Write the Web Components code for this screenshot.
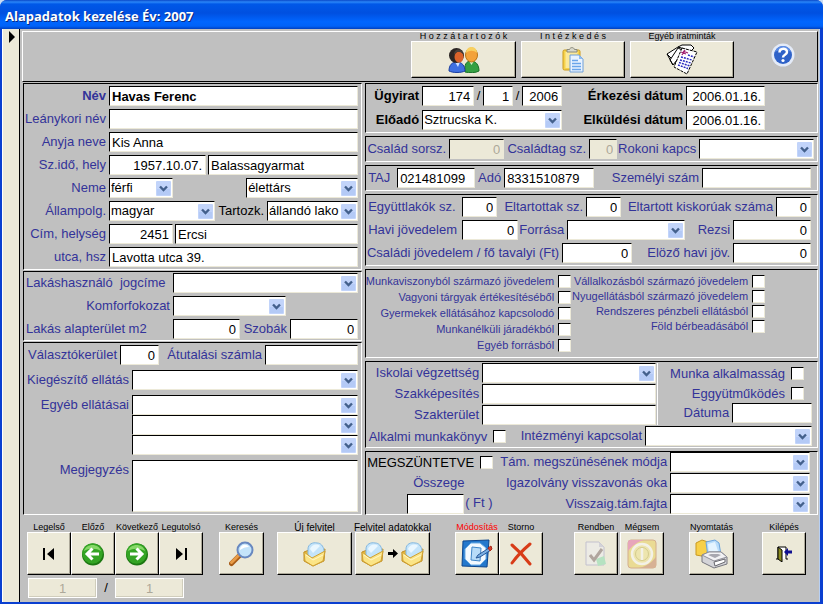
<!DOCTYPE html>
<html lang="hu">
<head>
<meta charset="utf-8">
<title>Alapadatok kezelése</title>
<style>
  body {
    margin: 0;
    background: #c9dcf4;
    font: 13px/16px "Liberation Sans", Arial, sans-serif;
    color: #000;
  }
</style>
</head>
<body>
<app-window heading="Alapadatok kezelése Év: 2007">
  <tool-header>
    <tool-button label="H o z z á t a r t o z ó k" icon="people" w="105" h="37"></tool-button>
    <tool-button label="I n t é z k e d é s" icon="clipboard" w="104" h="37"></tool-button>
    <tool-button label="Egyéb iratminták" icon="papers" w="104" h="37"></tool-button>
    <help-link></help-link>
  </tool-header>

  <form-columns>
    <form-stack slot="left" gap="1">
      <group-box gap="3" pad="2">
        <form-row><text-field label="Név" lw="82" value="Havas Ferenc" strong grow></text-field></form-row>
        <form-row><text-field label="Leánykori név" lw="82" grow></text-field></form-row>
        <form-row><text-field label="Anyja neve" lw="82" value="Kis Anna" grow></text-field></form-row>
        <form-row gap="2">
          <text-field label="Sz.idő, hely" lw="82" w="97" value="1957.10.07." align="end"></text-field>
          <text-field name="Születési hely" value="Balassagyarmat" grow></text-field>
        </form-row>
        <form-row spread>
          <select-field label="Neme" lw="82" w="64" value="férfi"></select-field>
          <select-field name="Családi állapot" w="112" value="élettárs"></select-field>
        </form-row>
        <form-row>
          <select-field label="Állampolg." lw="82" w="106" value="magyar"></select-field>
          <select-field label="Tartozk." lw="49" value="állandó lako" dark grow></select-field>
        </form-row>
        <form-row gap="2">
          <text-field label="Cím, helység" lw="82" w="64" value="2451" align="end"></text-field>
          <text-field name="Helység" value="Ercsi" grow></text-field>
        </form-row>
        <form-row><text-field label="utca, hsz" lw="82" value="Lavotta utca 39." grow></text-field></form-row>
      </group-box>

      <group-box gap="3" pad="1">
        <form-row><select-field label="Lakáshasználó  jogcíme" lw="146" start grow></select-field></form-row>
        <form-row><select-field label="Komforfokozat" lw="146" w="113"></select-field></form-row>
        <form-row>
          <text-field label="Lakás alapterület m2" lw="146" w="67" value="0" align="end" start></text-field>
          <text-field label="Szobák" lw="47" value="0" align="end" grow></text-field>
        </form-row>
      </group-box>

      <group-box gap="5" pad="2" fill>
        <form-row>
          <text-field label="Választókerület" lw="93" w="39" value="0" align="end"></text-field>
          <text-field label="Átutalási számla" lw="103" grow></text-field>
        </form-row>
        <form-row><select-field label="Kiegészítő ellátás" lw="105" grow></select-field></form-row>
        <form-stack gap="0">
          <form-row><select-field label="Egyéb ellátásai" lw="105" grow></select-field></form-row>
          <form-row indent="108"><select-field name="Egyéb ellátás 2" grow></select-field></form-row>
          <form-row indent="108"><select-field name="Egyéb ellátás 3" grow></select-field></form-row>
        </form-stack>
        <form-row><text-field label="Megjegyzés" lw="105" multiline grow></text-field></form-row>
      </group-box>
    </form-stack>

    <form-stack slot="right" gap="3">
      <group-box gap="4" pad="2">
        <form-row>
          <text-field label="Ügyirat" lw="53" w="52" value="174" align="end" heavy></text-field>
          <slash-mark></slash-mark>
          <text-field name="Alszám" w="30" value="1" align="end"></text-field>
          <slash-mark></slash-mark>
          <text-field name="Év" w="40" value="2006" align="end"></text-field>
          <text-field label="Érkezési dátum" lw="121" w="79" value="2006.01.16." align="end" heavy></text-field>
        </form-row>
        <form-row>
          <select-field label="Előadó" lw="53" w="140" value="Sztrucska K." heavy></select-field>
          <text-field label="Elküldési dátum" lw="121" w="79" value="2006.01.16." align="end" heavy></text-field>
        </form-row>
      </group-box>

      <group-box pad="2">
        <form-row>
          <text-field label="Család sorsz." lw="80" w="55" value="0" align="end" disabled></text-field>
          <text-field label="Családtag sz." lw="82" w="28" value="0" align="end" disabled></text-field>
          <select-field label="Rokoni kapcs" lw="79" grow></select-field>
        </form-row>
      </group-box>

      <group-box pad="2" inset="6">
        <form-row>
          <text-field label="TAJ" lw="28" w="78" value="021481099" start></text-field>
          <text-field label="Adó" lw="26" w="90" value="8331510879"></text-field>
          <text-field label="Személyi szám" lw="105" grow></text-field>
        </form-row>
      </group-box>

      <group-box gap="3" pad="2" inset="6">
        <form-row>
          <text-field label="Együttlakók sz." lw="93" w="35" value="0" align="end" start></text-field>
          <text-field label="Eltartottak sz." lw="86" w="35" value="0" align="end"></text-field>
          <text-field label="Eltartott kiskorúak száma" lw="152" value="0" align="end" grow></text-field>
        </form-row>
        <form-row>
          <text-field label="Havi jövedelem" lw="93" w="56" value="0" align="end" start></text-field>
          <select-field label="Forrása" lw="46" w="118"></select-field>
          <text-field label="Rezsi" lw="45" value="0" align="end" grow></text-field>
        </form-row>
        <form-row>
          <text-field label="Családi jövedelem / fő tavalyi (Ft)" lw="193" w="70" value="0" align="end"></text-field>
          <text-field label="Elöző havi jöv." lw="98" value="0" align="end" grow></text-field>
        </form-row>
      </group-box>

      <group-box pad="5">
        <form-row top>
          <form-stack gap="3" w="205">
            <check-field label="Munkaviszonyból származó jövedelem" small></check-field>
            <check-field label="Vagyoni tárgyak értékesítéséből" small></check-field>
            <check-field label="Gyermekek ellátásához kapcsolodó" small></check-field>
            <check-field label="Munkanélküli járadékból" small></check-field>
            <check-field label="Egyéb forrásból" small></check-field>
          </form-stack>
          <form-stack gap="2" w="194">
            <check-field label="Vállalkozásból származó jövedelem" small></check-field>
            <check-field label="Nyugellátásból származó jövedelem" small></check-field>
            <check-field label="Rendszeres pénzbeli ellátásból" small></check-field>
            <check-field label="Föld bérbeadásából" small></check-field>
          </form-stack>
        </form-row>
      </group-box>

      <group-box gap="1" pad="1" inset="5">
        <form-row top>
          <form-stack gap="1" w="292" ruled>
            <form-row><select-field label="Iskolai végzettség" lw="113" grow></select-field></form-row>
            <form-row><text-field label="Szakképesítés" lw="113" grow></text-field></form-row>
            <form-row><text-field label="Szakterület" lw="113" grow></text-field></form-row>
          </form-stack>
          <form-stack gap="0" grow>
            <check-field label="Munka alkalmasság" inset="8"></check-field>
            <check-field label="Eggyütműködés" inset="8"></check-field>
            <form-row><text-field label="Dátuma" lw="71" grow></text-field></form-row>
          </form-stack>
        </form-row>
        <form-row>
          <check-field label="Alkalmi munkakönyv" w="140"></check-field>
          <select-field label="Intézményi kapcsolat" lw="136" grow></select-field>
        </form-row>
      </group-box>

      <group-box pad="0" inset="7">
        <form-row top>
          <form-stack gap="1" w="127">
            <check-field label="MEGSZÜNTETVE" dark></check-field>
            <form-row indent="41"><text-field label="Összege" w="57" suffix="( Ft )" stacked></text-field></form-row>
          </form-stack>
          <form-stack gap="1" grow>
            <form-row><select-field label="Tám. megszünésének módja" lw="174" grow></select-field></form-row>
            <form-row><select-field label="Igazolvány visszavonás oka" lw="174" grow></select-field></form-row>
            <form-row><select-field label="Visszaig.tám.fajta" lw="174" grow></select-field></form-row>
          </form-stack>
        </form-row>
      </group-box>
    </form-stack>
  </form-columns>

  <tool-footer>
    <button-group space="5">
      <tool-button label="Legelső" icon="first"></tool-button>
      <tool-button label="Előző" icon="prev"></tool-button>
      <tool-button label="Következő" icon="next"></tool-button>
      <tool-button label="Legutolsó" icon="last"></tool-button>
    </button-group>
    <button-group space="16">
      <tool-button label="Keresés" icon="search" w="45"></tool-button>
    </button-group>
    <button-group space="13" gap="3">
      <tool-button label="Új felvitel" icon="folder" w="75" roomy></tool-button>
      <tool-button label="Felvitel adatokkal" icon="copy" w="75" roomy></tool-button>
    </button-group>
    <button-group space="25">
      <tool-button label="Módosítás" icon="edit" alert></tool-button>
      <tool-button label="Storno" icon="cross"></tool-button>
    </button-group>
    <button-group space="31" gap="2">
      <tool-button label="Rendben" icon="accept" disabled></tool-button>
      <tool-button label="Mégsem" icon="cancel" disabled></tool-button>
    </button-group>
    <button-group space="25">
      <tool-button label="Nyomtatás" icon="printer" w="45"></tool-button>
    </button-group>
    <button-group space="28">
      <tool-button label="Kilépés" icon="exit"></tool-button>
    </button-group>
    <record-counter slot="counter" current="1" total="1"></record-counter>
  </tool-footer>
</app-window>

<script>
const ICONS = {
  people: `<svg width="32" height="26" viewBox="0 0 32 26">
    <path d="M17 25c-1-7 1-11 6-11 5 0 8 4 8 10-3 2-10 2-14 1z" fill="#35a043" stroke="#187028"/>
    <path d="M21 14l2.500 4 2.500-4z" fill="#d8f0d0"/>
    <ellipse cx="23.500" cy="8" rx="6" ry="7" fill="#f3a23a" stroke="#b87416"/>
    <path d="M18 6c0-8 11-8 11 0-3-3-8-3-11 0z" fill="#f8d060"/>
    <path d="M1 24c0-6 3-9 8-9 5 0 8 4 8 9-4 2-12 2-16 0z" fill="#3f6fe0" stroke="#1c3fa0"/>
    <path d="M7 15l3 5 2-5z" fill="#cfe0ff"/>
    <circle cx="8.500" cy="8.500" r="7.500" fill="#2b2523"/>
    <ellipse cx="11" cy="10" rx="4.500" ry="5.500" fill="#d9622b"/>
    <path d="M6 8c2-4 6-4 9-1 0-5-9-7-9 1z" fill="#48403c"/></svg>`,
  clipboard: `<svg width="22" height="26" viewBox="0 0 22 26">
    <rect x="1" y="3" width="17" height="20" rx="1.500" fill="#f6d24c" stroke="#c99a1c"/>
    <rect x="3.500" y="5" width="12" height="16" fill="#fbe99a"/>
    <path d="M5 5V2.500h2.500C8 0 12 0 12.500 2.500H15V5z" fill="#d8d8cc" stroke="#8a8a7c"/>
    <path d="M8 8h9l4 4v13H8z" fill="#e8f3ff" stroke="#6e9fd8"/>
    <path d="M17 8v4h4z" fill="#8fbcf0"/>
    <path d="M10 13.500h6M10 16.500h9M10 19.500h9M10 22.500h9" stroke="#6aa5ea" stroke-width="1.500"/></svg>`,
  papers: `<svg width="34" height="31" viewBox="0 0 34 31">
    <path d="M2 10l11-7 12 2-9 19z" fill="#fff" stroke="#000"/>
    <path d="M2 10l6 11M5 16L13 4l6 3-11 14z" fill="#fff" stroke="#000"/>
    <path d="M13 3l4-2h9l3 3-3 3z" fill="#fff" stroke="#000"/>
    <path d="M17 4l15 4-10 22-13-7z" fill="#fff" stroke="#000" stroke-dasharray="3 1"/>
    <path d="M16 8l5 2M20 6l-3 5M18 7l5 2" stroke="#a02070" stroke-width="1.300"/>
    <path d="M23 11l6 2M16 13l11 3M15 16l11 3M14 18.500l11 3.500M13 21l10 3.500" stroke="#2a2ac0" stroke-width="1.500" stroke-dasharray="2 1"/></svg>`,
  first: `<svg width="12" height="12" viewBox="0 0 12 12"><path d="M0 0h2v12H0zM11 0v12L4 6z"/></svg>`,
  last: `<svg width="12" height="12" viewBox="0 0 12 12"><path d="M10 0h2v12h-2zM1 0v12l7-6z"/></svg>`,
  prev: `<svg width="24" height="24" viewBox="0 0 24 24">
    <circle cx="12" cy="12.500" r="11" fill="#1c7812"/><circle cx="11.500" cy="11.500" r="10.300" fill="#34a424"/>
    <path d="M3 9C5 1 18 1 20 9 15 6 8 6 3 9z" fill="#86d868"/>
    <path d="M18 12H6M11.500 6.500L6 12l5.500 5.500" fill="none" stroke="#fff" stroke-width="3"/></svg>`,
  next: `<svg width="24" height="24" viewBox="0 0 24 24">
    <circle cx="12" cy="12.500" r="11" fill="#1c7812"/><circle cx="11.500" cy="11.500" r="10.300" fill="#34a424"/>
    <path d="M3 9C5 1 18 1 20 9 15 6 8 6 3 9z" fill="#86d868"/>
    <path d="M5 12h12M11.500 6.500L17 12l-5.500 5.500" fill="none" stroke="#fff" stroke-width="3"/></svg>`,
  search: `<svg width="26" height="26" viewBox="0 0 26 26">
    <path d="M2.500 22.500l8-8" stroke="#a85c18" stroke-width="5" stroke-linecap="round"/>
    <path d="M2.500 21.500l8-8" stroke="#e89c48" stroke-width="3" stroke-linecap="round"/>
    <circle cx="16" cy="9" r="7.500" fill="#c4e4fa" stroke="#6888c0" stroke-width="2"/>
    <path d="M11 9c0-5 6-7 9-3-4 0-6 1-9 3z" fill="#fff"/></svg>`,
  folder: `<svg width="24" height="26" viewBox="0 0 24 26">
    <path d="M1 11l5-2 3 2 13-3-1 12-11 5-9-5z" fill="#e9b93c" stroke="#c0902a"/>
    <path d="M5 8c0-5 5-7 9-6 4 0 6 3 7 7v5l-11 5-5-4z" fill="#c4e4fa" stroke="#84b8e0"/>
    <path d="M7 8c1-4 7-6 10-3l-7 7z" fill="#eaf7ff"/>
    <path d="M1 11l8 6 13-7-2 10-10 5-8-5z" fill="#fbe486" stroke="#d0a030"/>
    <path d="M3 14l7 5 10-5" fill="none" stroke="#fff6c8"/></svg>`,
  edit: `<svg width="32" height="30" viewBox="0 0 32 30">
    <path d="M2 2l26-1-2 27-25-1z" fill="#2478cc" stroke="#0c448c"/>
    <path d="M10 4h9l6 5v11l-6 6h-9l-6-6V10z" fill="#f2f9ff" stroke="#6cace4"/>
    <path d="M11 8l9 1-1 13-9-1z" fill="#b8dcf8" stroke="#3f86c8"/>
    <path d="M28 9L17 16l-2 3 4-1 11-7z" fill="#7ab0e4" stroke="#285898"/>
    <path d="M27 9l3-2 1 3-2 2z" fill="#d8402c" stroke="#a82818"/></svg>`,
  cross: `<svg width="24" height="24" viewBox="0 0 24 24">
    <path d="M3 3c7 6 12 11 18 19M21 2C14 8 8 14 3 21" fill="none" stroke="#d83c18" stroke-width="3" stroke-linecap="round"/></svg>`,
  accept: `<svg width="22" height="26" viewBox="0 0 22 26">
    <path d="M1 1h13l5 5v18H1z" fill="#eef0fa" stroke="#8888c0"/>
    <path d="M14 1v5h5z" fill="#b0b0d8"/>
    <path d="M11 18l8-3 2 8-8 2z" fill="#68d8a0"/>
    <path d="M5 14l4 5 8-11" fill="none" stroke="#584048" stroke-width="3"/></svg>`,
  cancel: `<svg width="30" height="30" viewBox="0 0 30 30">
    <rect x="1" y="1" width="28" height="28" rx="3" fill="#e8c830" stroke="#b05820"/>
    <path d="M1 12V3c0-1 1-2 2-2h14C10 3 5 7 1 12z" fill="#e04090"/>
    <path d="M29 18v9c0 1-1 2-2 2H12c8-2 13-6 17-11z" fill="#b86030"/>
    <circle cx="15" cy="15" r="10" fill="#f0e070" stroke="#fff" stroke-width="2.500"/>
    <circle cx="15" cy="15" r="6.500" fill="none" stroke="#b0a020"/>
    <path d="M15 9v12" stroke="#fff" stroke-width="2.500"/></svg>`,
  printer: `<svg width="33" height="30" viewBox="0 0 33 30">
    <path d="M1 4l6-3 6 2-1 15-11-2z" fill="#f8d048" stroke="#c89820"/>
    <path d="M11 3l9-2 4 3 2 12-13 2z" fill="#b8dcfa" stroke="#6ca4dc"/>
    <path d="M13 5l7-2 3 9-9 3z" fill="#e4f4ff"/>
    <path d="M7 16l7-3h12l6 5v7l-13 4-12-6z" fill="#d4d4d8" stroke="#76767e"/>
    <path d="M7 16l7-3h12l6 5-13 4z" fill="#f2f2f4" stroke="#909098"/>
    <path d="M13 16l3-1h7l3 1-6 3z" fill="#a8a8b0"/>
    <path d="M19 23l11-3v3l-10 4z" fill="#fff" stroke="#66666c"/></svg>`,
  exit: `<svg width="17" height="16" viewBox="0 0 17 16">
    <path d="M0 13h2V1h8v12h2" fill="#fff" stroke="#000"/>
    <path d="M2 1l4 3v12l-4-3z" fill="#8c8c20" stroke="#000"/>
    <path d="M8 6l4-4v2.500h4v3h-4V10z" fill="#101090"/></svg>`,
};
ICONS.copy = `${ICONS.folder}<svg width="10" height="9" viewBox="0 0 10 9"><path d="M0 3h5V0l5 4.500L5 9V6H0z"/></svg>${ICONS.folder}`;

// Shared look of the sunken controls and their labels
const FIELD_STYLE = `
  :host {
    display: flex;
    align-items: flex-start;
    gap: 3px;
    flex: none;
    color: #333399;
  }
  :host([grow]) { flex: 1; min-width: 0; }
  :host([dark]), :host([heavy]) { color: #000; }
  label {
    box-sizing: border-box;
    flex: none;
    width: var(--lw, auto);
    line-height: 19px;
    text-align: right;
    white-space: pre;
  }
  :host([start]) label { text-align: left; padding-left: 2px; }
  :host([heavy]) label, :host([strong]) label, :host([strong]) .control { font-weight: bold; }
  .control {
    box-sizing: border-box;
    display: block;
    width: var(--w, auto);
    height: 20px;
    min-width: 0;
    margin: 0;
    padding: 0 3px 0 2px;
    border: 1px solid;
    border-color: #000 #ece9d8 #ece9d8 #000;
    border-radius: 0;
    outline: none;
    background: #fff;
    color: #000;
    font: inherit;
    appearance: none;
  }
  :host([grow]) .control { flex: 1; width: 100%; }
  .control:disabled { background: #ece9d8; color: #aca899; opacity: 1; }
`;

class BaseElement extends HTMLElement {
  constructor() {
    super();
    this.attachShadow({ mode: 'open' });
  }

  connectedCallback() {
    ['lw', 'w', 'h', 'gap', 'pad', 'inset', 'indent', 'space'].forEach((name) => {
      if (this.hasAttribute(name)) {
        this.style.setProperty(`--${name}`, `${this.getAttribute(name)}px`);
      } else {
        // keep values of an outer element from being inherited
        this.style.setProperty(`--${name}`, 'initial');
      }
    });
    this.render();
  }

  attr(name) {
    return this.getAttribute(name) || '';
  }

  get labelHtml() {
    return this.hasAttribute('label') ? `<label for="control">${this.attr('label')}</label>` : '';
  }

  get ariaHtml() {
    return this.hasAttribute('name') ? `aria-label="${this.attr('name')}"` : '';
  }
}

class AppWindow extends BaseElement {
  render() {
    this.shadowRoot.innerHTML = `
      <style>
        :host {
          display: flex;
          flex-direction: column;
          box-sizing: border-box;
          min-height: 100vh;
          border-radius: 7px 7px 0 0;
          overflow: hidden;
          background: #0a3fd0;
        }
        h1 {
          margin: 0;
          padding: 2px 5px 0;
          height: 27px;
          font: bold 13px/28px "Open Sans", sans-serif;
          color: #fff;
          text-shadow: 1px 1px #0a2a80;
          background: linear-gradient(#0a48c8, #2a86f8 7%, #0058e8 14%, #0050e0 45%, #0066ff 75%, #0062f8 90%, #0040c0);
        }
        .frame {
          flex: 1;
          display: flex;
          padding: 0 3px 2px 2px;
        }
        .selector {
          flex: none;
          width: 16px;
          border-left: 1px solid #fff;
          border-right: 1px solid #000;
          background: #ece9d8;
        }
        .selector svg { display: block; margin: 2px 0 0 6px; }
        main {
          flex: 1;
          min-width: 0;
          padding: 2px 1px 0 2px;
          background: #c0c0c0;
          border-right: 1px solid #b8d0f4;
        }
      </style>
      <h1>${this.attr('heading')}</h1>
      <div class="frame">
        <div class="selector"><svg width="6" height="12" viewBox="0 0 6 12"><path d="M0 0l6 6-6 6z"/></svg></div>
        <main><slot></slot></main>
      </div>
    `;
  }
}

class ToolHeader extends BaseElement {
  render() {
    this.shadowRoot.innerHTML = `
      <style>
        :host {
          display: flex;
          justify-content: flex-end;
          gap: 5px;
          padding: 0 22px 3px 0;
          border: 1px solid;
          border-color: #fff #000 #000 #fff;
          background: #c0c0c0;
        }
      </style>
      <slot></slot>
    `;
  }
}

class HelpLink extends BaseElement {
  render() {
    this.shadowRoot.innerHTML = `
      <style>
        :host { display: flex; align-items: center; margin-left: 32px; }
        a { display: block; height: 24px; }
      </style>
      <a href="#sugo" aria-label="Súgó">
        <svg width="24" height="24" viewBox="0 0 24 24">
          <circle cx="12" cy="12" r="11.500" fill="#e4ebf8"/>
          <circle cx="12" cy="12" r="9" fill="#2f62c8"/>
          <path d="M4 9c2-8 14-8 16 0-5-3-11-3-16 0z" fill="#5c8ce4"/>
          <path d="M8.500 9.500c0-5 7.500-5 7.500-.5 0 3-4 2.500-4 5.500" fill="none" stroke="#fff" stroke-width="2.500"/>
          <circle cx="12" cy="17.500" r="1.600" fill="#fff"/>
        </svg>
      </a>
    `;
  }
}

class ToolButton extends BaseElement {
  render() {
    this.shadowRoot.innerHTML = `
      <style>
        :host { display: flex; flex-direction: column; flex: none; width: var(--w, 44px); }
        label {
          display: flex;
          justify-content: center;
          font-size: 9px;
          line-height: 9px;
          white-space: pre;
          color: #000;
        }
        :host([roomy]) label { font-size: 10px; }
        :host([alert]) label { color: #f00; }
        button {
          display: flex;
          justify-content: center;
          align-items: center;
          gap: 3px;
          width: 100%;
          height: var(--h, 43px);
          margin: 0;
          padding: 0;
          border: 1px solid;
          border-color: #fff #000 #000 #fff;
          box-shadow: inset -1px -1px #aca899;
          background: #ece9d8;
        }
        svg { display: block; flex: none; }
        button:disabled svg { opacity: 0.4; }
      </style>
      <label for="control">${this.attr('label')}</label>
      <button id="control" type="button" ${this.hasAttribute('disabled') ? 'disabled' : ''}>${ICONS[this.attr('icon')]}</button>
    `;
  }
}

class FormColumns extends BaseElement {
  render() {
    this.shadowRoot.innerHTML = `
      <style>
        :host {
          display: grid;
          grid-template-columns: minmax(0, 340fr) minmax(0, 454fr);
          gap: 3px;
          padding: 1px 0 0 1px;
        }
        ::slotted(*) { min-width: 0; }
      </style>
      <slot name="left"></slot>
      <slot name="right"></slot>
    `;
  }
}

class FormStack extends BaseElement {
  render() {
    this.shadowRoot.innerHTML = `
      <style>
        :host {
          display: flex;
          flex-direction: column;
          box-sizing: border-box;
          gap: var(--gap, 0);
          width: var(--w, auto);
        }
        :host([grow]) { flex: 1; min-width: 0; }
        :host([ruled]) { border-right: 1px solid #fff; padding-right: 1px; }
      </style>
      <slot></slot>
    `;
  }
}

class FormRow extends BaseElement {
  render() {
    this.shadowRoot.innerHTML = `
      <style>
        :host {
          display: flex;
          align-items: center;
          gap: var(--gap, 0);
          padding-left: var(--indent, 0);
        }
        :host([top]) { align-items: flex-start; }
        :host([spread]) { justify-content: space-between; }
      </style>
      <slot></slot>
    `;
  }
}

class GroupBox extends BaseElement {
  render() {
    this.shadowRoot.innerHTML = `
      <style>
        :host {
          display: flex;
          flex-direction: column;
          gap: var(--gap, 0);
          padding: var(--pad, 0) var(--inset, 3px) var(--pad, 0) 0;
          border: 1px solid;
          border-color: #000 #fff #fff #000;
        }
        :host([fill]) { flex: 1; }
      </style>
      <slot></slot>
    `;
  }
}

class TextField extends BaseElement {
  get controlHtml() {
    if (this.hasAttribute('multiline')) {
      return `<textarea id="control" class="control"></textarea>`;
    }
    const disabled = this.hasAttribute('disabled') ? 'disabled' : '';
    return `<input id="control" class="control" type="text" value="${this.attr('value')}" ${this.ariaHtml} ${disabled}>`;
  }

  render() {
    const suffix = this.hasAttribute('suffix') ? `<span>${this.attr('suffix')}</span>` : '';
    this.shadowRoot.innerHTML = `
      <style>
        ${FIELD_STYLE}
        :host([align="end"]) .control { text-align: right; }
        textarea.control { height: 52px; resize: none; }
        :host([stacked]) {
          display: grid;
          grid-template-columns: auto auto;
          gap: 1px;
        }
        :host([stacked]) label { grid-column: 1 / -1; text-align: left; padding-left: 6px; line-height: 20px; }
        span { line-height: 18px; }
      </style>
      ${this.labelHtml}${this.controlHtml}${suffix}
    `;
  }
}

class SelectField extends BaseElement {
  render() {
    this.shadowRoot.innerHTML = `
      <style>
        ${FIELD_STYLE}
        .box { display: grid; width: var(--w, auto); }
        :host([grow]) .box { flex: 1; min-width: 0; }
        .box > * { grid-area: 1 / 1; }
        .control { width: 100%; padding: 0 16px 0 1px; }
        svg { align-self: center; justify-self: end; margin-right: 2px; pointer-events: none; }
      </style>
      ${this.labelHtml}
      <div class="box">
        <select id="control" class="control" ${this.ariaHtml}><option>${this.attr('value')}</option></select>
        <svg width="15" height="15" viewBox="0 0 15 15">
          <rect width="15" height="15" rx="1" fill="#c2d4fa"/>
          <rect x="1" y="8" width="13" height="6" fill="#b4caf6"/>
          <path d="M4 5.500L7.500 9 11 5.500" fill="none" stroke="#43608c" stroke-width="2.400"/>
        </svg>
      </div>
    `;
  }
}

class CheckField extends BaseElement {
  render() {
    this.shadowRoot.innerHTML = `
      <style>
        ${FIELD_STYLE}
        :host {
          box-sizing: border-box;
          align-items: center;
          justify-content: flex-end;
          gap: 6px;
          width: var(--w, auto);
          height: 20px;
          padding-right: var(--inset, 0);
        }
        :host([small]) { height: 13px; gap: 4px; font-size: 11px; }
        :host([small]) label { line-height: 13px; }
        .control { flex: none; width: 13px; height: 13px; padding: 0; }
      </style>
      ${this.labelHtml}<input id="control" class="control" type="checkbox">
    `;
  }
}

class SlashMark extends BaseElement {
  render() {
    this.shadowRoot.innerHTML = `
      <style>
        :host { display: block; width: 9px; text-align: center; }
      </style>/
    `;
  }
}

class ToolFooter extends BaseElement {
  render() {
    this.shadowRoot.innerHTML = `
      <style>
        :host { display: block; padding-top: 8px; }
        .buttons { display: flex; }
      </style>
      <div class="buttons"><slot></slot></div>
      <slot name="counter"></slot>
    `;
  }
}

class ButtonGroup extends BaseElement {
  render() {
    this.shadowRoot.innerHTML = `
      <style>
        :host { display: flex; align-items: flex-end; gap: var(--gap, 0); margin-left: var(--space, 0); }
      </style>
      <slot></slot>
    `;
  }
}

class RecordCounter extends BaseElement {
  render() {
    this.shadowRoot.innerHTML = `
      <style>
        :host { display: flex; align-items: center; padding: 3px 0 2px 6px; }
        input {
          box-sizing: border-box;
          width: 69px;
          height: 20px;
          padding: 0;
          border: 1px solid #fff;
          box-shadow: inset -1px -1px #d0cdbc;
          background: #ece9d8;
          color: #aca899;
          font: inherit;
          text-align: center;
        }
        span { width: 18px; text-align: center; }
      </style>
      <input type="text" value="${this.attr('current')}" aria-label="Aktuális rekord" disabled>
      <span>/</span>
      <input type="text" value="${this.attr('total')}" aria-label="Rekordok száma" disabled>
    `;
  }
}

customElements.define('app-window', AppWindow);
customElements.define('tool-header', ToolHeader);
customElements.define('help-link', HelpLink);
customElements.define('tool-button', ToolButton);
customElements.define('form-columns', FormColumns);
customElements.define('form-stack', FormStack);
customElements.define('form-row', FormRow);
customElements.define('group-box', GroupBox);
customElements.define('text-field', TextField);
customElements.define('select-field', SelectField);
customElements.define('check-field', CheckField);
customElements.define('slash-mark', SlashMark);
customElements.define('tool-footer', ToolFooter);
customElements.define('button-group', ButtonGroup);
customElements.define('record-counter', RecordCounter);
</script>
</body>
</html>
